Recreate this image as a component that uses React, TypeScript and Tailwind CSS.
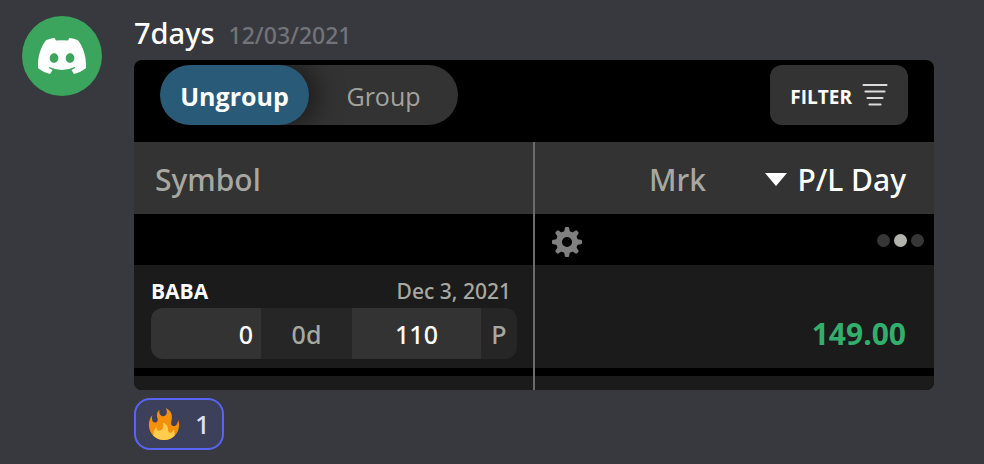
import { useState } from "react";
import clsx from "clsx";

interface Position {
  symbol: string;
  date: string;
  quantity: string;
  days: string;
  strike: string;
  side: string;
  plDay: string;
}

const POSITIONS: Position[] = [
  {
    symbol: "BABA",
    date: "Dec 3, 2021",
    quantity: "0",
    days: "0d",
    strike: "110",
    side: "P",
    plDay: "149.00",
  },
];

function DiscordLogo() {
  return (
    <svg viewBox="0 0 48 36" className="h-9 w-12" aria-hidden="true">
      <path
        fill="#ffffff"
        fillRule="evenodd"
        d="M8 2.2 Q12 0.5 16.6 0 L18 2.6 Q24 1.8 30 2.6 L31.4 0 Q36 0.5 40 2.2 C45.5 9.5 48.6 19 47.9 30.2 Q42.6 34.4 36 36 L33.4 32 L37.2 30 L36.6 29 Q24 35 11.4 29 L10.8 30 L14.6 32 L12 36 Q5.4 34.4 0.1 30.2 C-0.6 19 2.5 9.5 8 2.2 Z M16 15.2 C13.6 15.2 11.7 17.3 11.7 20 C11.7 22.7 13.6 24.8 16 24.8 C18.4 24.8 20.3 22.7 20.3 20 C20.3 17.3 18.4 15.2 16 15.2 Z M32 15.2 C29.6 15.2 27.7 17.3 27.7 20 C27.7 22.7 29.6 24.8 32 24.8 C34.4 24.8 36.3 22.7 36.3 20 C36.3 17.3 34.4 15.2 32 15.2 Z"
      />
    </svg>
  );
}

// Eight teeth around a ring
function GearIcon() {
  return (
    <svg viewBox="0 0 30 30" className="block size-[30px]" aria-hidden="true">
      <g fill="#808080">
        {[0, 45, 90, 135, 180, 225, 270, 315].map((angle) => (
          <path
            key={angle}
            d="M10.4 6.5 L12.2 4.6 L12.8 1.2 Q13 0 14 0 H16 Q17 0 17.2 1.2 L17.8 4.6 L19.6 6.5 Z"
            transform={`rotate(${angle} 15 15)`}
          />
        ))}
      </g>
      <circle cx="15" cy="15" r="8" fill="none" stroke="#808080" strokeWidth="5.8" />
    </svg>
  );
}

function FilterIcon() {
  return (
    <svg viewBox="0 0 26 24" className="h-6 w-[26px]" aria-hidden="true">
      <g stroke="#dcdcdc" strokeWidth="2.2" strokeLinecap="round">
        <path d="M1.5 2H24.5" />
        <path d="M3.5 8.5H22.5" />
        <path d="M5.5 15H20.5" />
        <path d="M7.5 21.5H18.5" />
      </g>
    </svg>
  );
}

function FireIcon() {
  return (
    <svg viewBox="0 0 36 36" className="size-8" aria-hidden="true">
      <path
        fill="#F4900C"
        d="M35 19c0-2.062-.367-4.039-1.04-5.868-.46 5.389-3.333 8.157-6.335 6.868-2.812-1.208-.917-5.917-.777-8.164.236-3.809-.012-8.169-6.931-11.794 2.875 5.5.333 8.917-2.333 9.125-2.958.231-5.667-2.542-4.667-7.042-3.238 2.386-3.332 6.402-2.333 9 1.042 2.708-.042 4.958-2.583 5.208-2.84.28-4.418-3.041-2.963-8.333C2.52 10.965 1 14.805 1 19c0 9.389 7.611 17 17 17s17-7.611 17-17z"
      />
      <path
        fill="#FFCC4D"
        d="M28.394 23.999c.148 3.084-2.561 4.293-4.019 3.709-2.106-.843-1.541-2.291-2.083-5.291s-2.625-5.083-5.708-6c2.25 6.333-1.247 8.667-3.08 9.084-1.872.426-3.753-.001-3.968-4.007C7.352 23.668 6 26.676 6 30c0 .368.023.73.055 1.09C9.125 34.124 13.342 36 18 36s8.875-1.876 11.945-4.91c.032-.36.055-.722.055-1.09 0-2.187-.584-4.236-1.606-6.001z"
      />
    </svg>
  );
}

function GroupToggle() {
  const [grouped, setGrouped] = useState(false);
  const options = [
    { label: "Ungroup", value: false },
    { label: "Group", value: true },
  ];

  return (
    <div className="flex h-[60px] overflow-hidden rounded-full bg-[#333333]">
      {options.map(({ label, value }) => (
        <button
          key={label}
          type="button"
          aria-pressed={grouped === value}
          onClick={() => setGrouped(value)}
          className={clsx(
            "w-[149px] rounded-full pt-1 text-[25px]",
            grouped === value
              ? "bg-[#295a78] font-bold text-white shadow-[6px_0_28px_#00000090]"
              : "text-[#a3a39e]"
          )}
        >
          {label}
        </button>
      ))}
    </div>
  );
}

function PositionRow({ position }: { position: Position }) {
  return (
    <tr className="bg-[#1b1b1b]">
      <td className="border-r-2 border-[#6b6b6b] pt-[11px] pr-4 pb-[9px] pl-[17px] align-top">
        <div className="flex h-8 items-center justify-between pr-1.5 text-[21px]">
          <span className="font-bold text-white">{position.symbol}</span>
          <span className="font-['Noto_Sans',sans-serif] font-medium text-[#a8a8a3]">
            {position.date}
          </span>
        </div>
        <div className="flex h-[51px] overflow-hidden rounded-xl bg-[#262626] font-['Noto_Sans',sans-serif] text-[25px] leading-[52px] font-medium text-[#a8a8a3]">
          <span className="w-[110px] bg-[#333333] pr-2 text-right text-white">
            {position.quantity}
          </span>
          <span className="w-[91px] text-center">{position.days}</span>
          <span className="flex-1 bg-[#333333] text-center text-white">{position.strike}</span>
          <span className="w-9 text-center">{position.side}</span>
        </div>
      </td>
      <td colSpan={2} className="pr-7 pb-3 text-right align-bottom">
        <span className="text-[30px] font-bold text-[#33ae6d]">{position.plDay}</span>
      </td>
    </tr>
  );
}

function PositionsPanel() {
  return (
    <div className="max-w-[800px] overflow-hidden rounded-lg bg-black font-['Open_Sans','Noto_Sans',sans-serif]">
      <div className="flex items-start justify-between px-[26px] pt-[5px] pb-[17px]">
        <GroupToggle />
        <button
          type="button"
          className="flex h-[60px] items-center gap-2.5 rounded-xl bg-[#333333] px-5 text-[19px] font-bold text-white"
        >
          <span className="pt-1">FILTER</span>
          <FilterIcon />
        </button>
      </div>

      <table className="w-full table-fixed border-separate border-spacing-0">
        <colgroup>
          <col className="w-[401px]" />
          <col />
          <col className="w-[228px]" />
        </colgroup>
        <thead className="font-['Noto_Sans',sans-serif]">
          <tr className="h-[72px] bg-[#333333] text-[30px]">
            <th
              scope="col"
              className="border-r-2 border-[#6b6b6b] pt-0.5 pl-[21px] text-left font-medium text-[#a8a8a3]"
            >
              Symbol
            </th>
            <th scope="col" className="pt-0.5 text-right font-medium text-[#a8a8a3]">
              Mrk
            </th>
            <th scope="col" className="pt-0.5 pr-7 font-medium text-white">
              <button type="button" className="ml-auto flex items-center gap-2.5">
                <svg viewBox="0 0 22 13" className="h-[13px] w-[22px]" aria-hidden="true">
                  <path d="M0 0H22L11 13Z" fill="#ffffff" />
                </svg>
                P/L Day
              </button>
            </th>
          </tr>
        </thead>
        <tbody>
          <tr className="h-[51px]">
            <td className="border-r-2 border-[#6b6b6b]" />
            <td className="pt-1 pl-[17px]">
              <button type="button" aria-label="Settings" className="block">
                <GearIcon />
              </button>
            </td>
            <td className="pt-0.5 pr-2.5">
              <div className="flex justify-end gap-1">
                <span className="size-[13px] rounded-full bg-[#363636]" />
                <span className="size-[13px] rounded-full bg-[#b3b3ad]" />
                <span className="size-[13px] rounded-full bg-[#363636]" />
              </div>
            </td>
          </tr>
          {POSITIONS.map((position) => (
            <PositionRow key={position.symbol} position={position} />
          ))}
          <tr className="h-2" aria-hidden="true">
            <td className="border-r-2 border-[#6b6b6b]" />
            <td colSpan={2} />
          </tr>
          <tr className="h-3.5 bg-[#1b1b1b]" aria-hidden="true">
            <td className="border-r-2 border-[#6b6b6b]" />
            <td colSpan={2} />
          </tr>
        </tbody>
      </table>
    </div>
  );
}

export default function App() {
  const [reacted, setReacted] = useState(true);

  return (
    <div className="min-h-screen bg-[#38393f] font-['Noto_Sans','Open_Sans',sans-serif]">
      <article className="flex items-start gap-8 pt-4 pr-[50px] pl-[22px]">
        <div className="flex size-20 shrink-0 items-center justify-center rounded-full bg-[#3ba55d]">
          <DiscordLogo />
        </div>
        <div className="min-w-0 flex-1">
          <header className="flex h-11 items-baseline gap-3.5">
            <h2 className="text-[29px] leading-[34px] font-medium text-white">7days</h2>
            <time
              dateTime="2021-12-03"
              className="text-[23px] leading-[34px] font-medium text-[#72747a]"
            >
              12/03/2021
            </time>
          </header>
          <PositionsPanel />
          <button
            type="button"
            aria-pressed={reacted}
            onClick={() => setReacted(!reacted)}
            className={clsx(
              "mt-2 flex h-[52px] items-center gap-[15px] rounded-2xl border-2 px-3 text-[26px] font-medium",
              reacted
                ? "border-[#5865f2] bg-[#3c405a] text-[#dee0fc]"
                : "border-transparent bg-[#2f3136] text-[#b9bbbe]"
            )}
          >
            <FireIcon />
            {reacted ? 1 : 0}
          </button>
        </div>
      </article>
    </div>
  );
}
